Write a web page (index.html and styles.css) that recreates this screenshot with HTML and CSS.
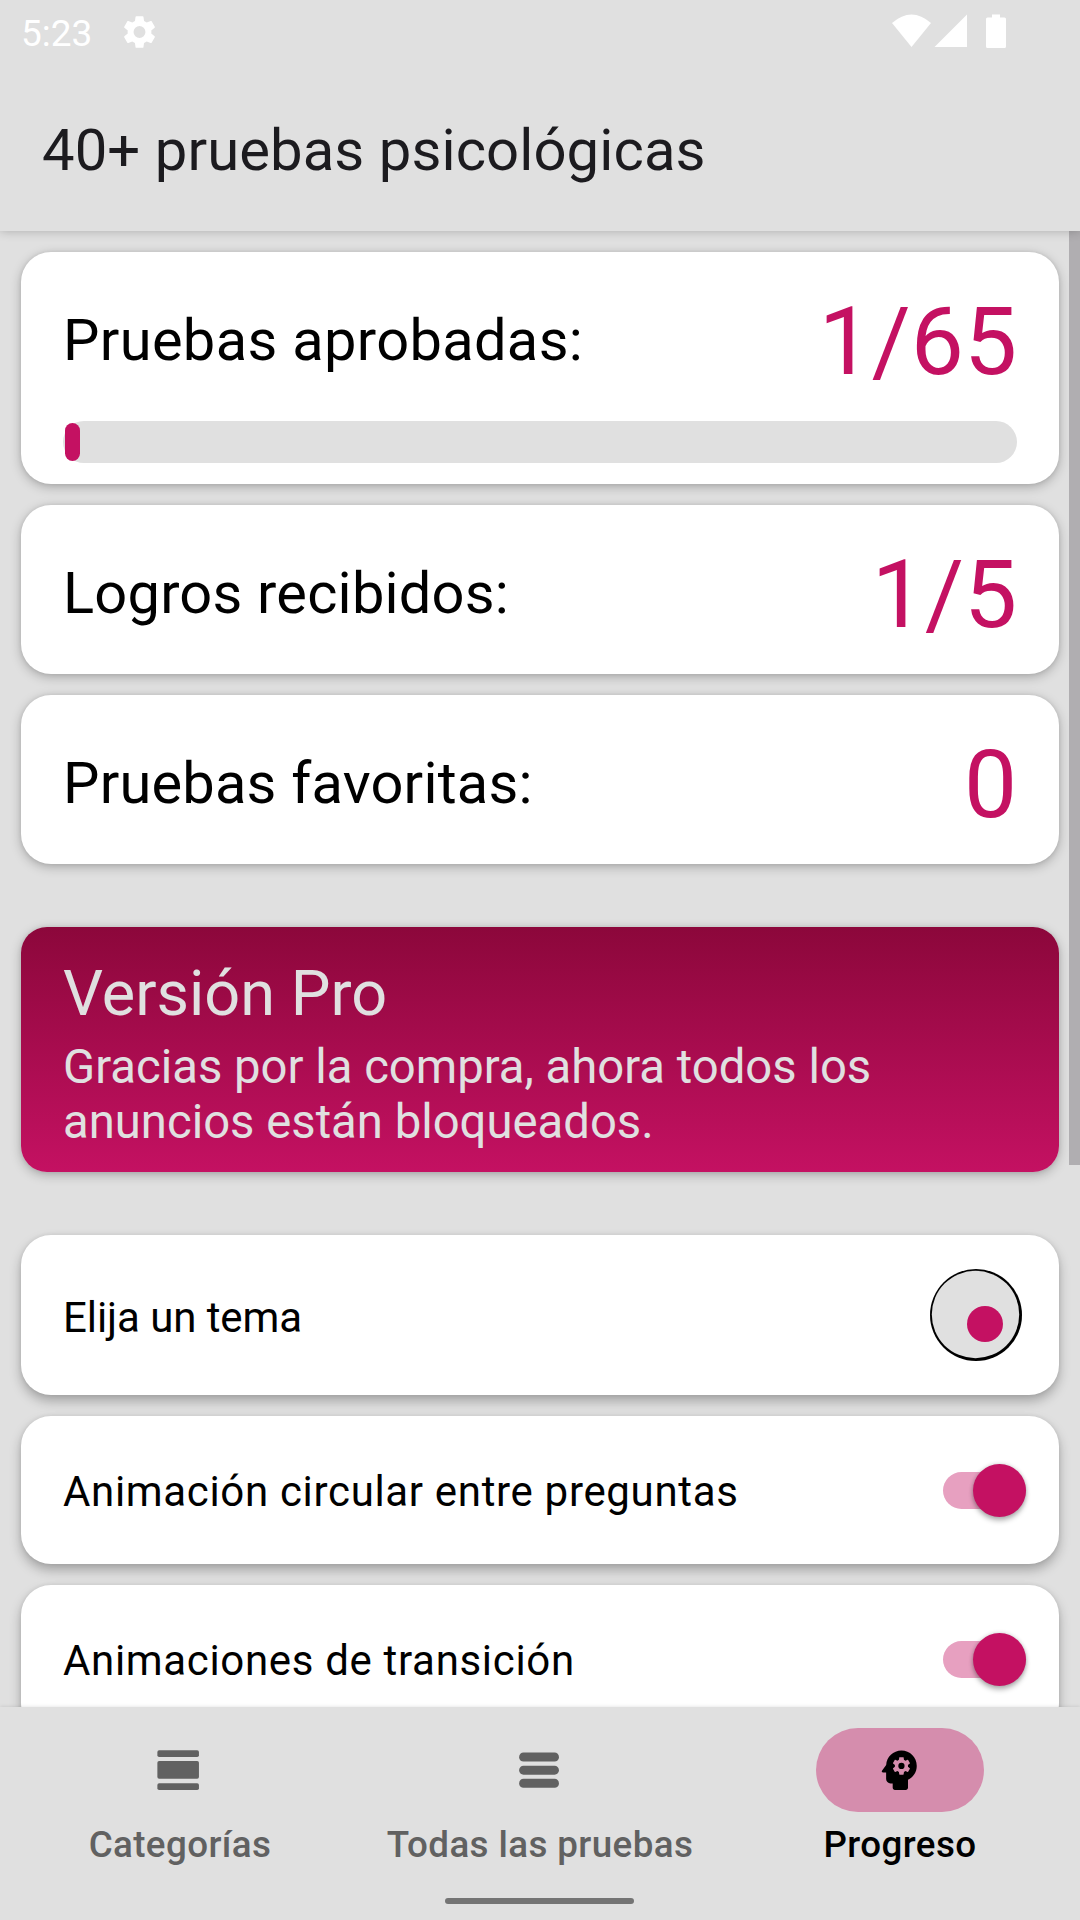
FILE: index.html
```
<!DOCTYPE html>
<html lang="es">
<head>
<meta charset="utf-8">
<title>40+ pruebas psicológicas</title>
<link rel="stylesheet" href="styles.css">
</head>
<body>
<div class="app">
  <header class="header">
    <div class="status">
      <span class="clock">5:23</span>
      <svg class="gear" viewBox="2 2 20 20"><path d="M19.14 12.94c.04-.3.06-.61.06-.94 0-.32-.02-.64-.07-.94l2.03-1.58c.18-.14.23-.41.12-.61l-1.92-3.32c-.12-.22-.37-.29-.59-.22l-2.39.96c-.5-.38-1.03-.7-1.62-.94l-.36-2.54c-.04-.24-.24-.41-.48-.41h-3.84c-.24 0-.43.17-.47.41l-.36 2.54c-.59.24-1.13.57-1.62.94l-2.39-.96c-.22-.08-.47 0-.59.22L2.74 8.87c-.12.21-.08.47.12.61l2.03 1.58c-.05.3-.09.63-.09.94s.02.64.07.94l-2.03 1.58c-.18.14-.23.41-.12.61l1.92 3.32c.12.22.37.29.59.22l2.39-.96c.5.38 1.03.7 1.62.94l.36 2.54c.05.24.24.41.48.41h3.84c.24 0 .44-.17.47-.41l.36-2.54c.59-.24 1.13-.56 1.62-.94l2.39.96c.22.08.47 0 .59-.22l1.92-3.32c.12-.22.07-.47-.12-.61l-2.01-1.58zM12 15.6A3.6 3.6 0 1 1 12 8.4a3.6 3.6 0 0 1 0 7.2z"/></svg>
      <svg class="system" viewBox="0 0 115 35"><path d="M0 9Q19.500-8 39 9L19.500 33z"/><path d="M42.500 33 75 .5V33z"/><path d="M100 .5h8v3h4.500q1.500 0 1.500 1.500v27.500q0 1.500-1.500 1.500h-17Q94 34 94 32.500V5q0-1.500 1.500-1.500h4.500z"/></svg>
    </div>
    <h1 class="title">40+ pruebas psicológicas</h1>
  </header>

  <main class="content">
    <div class="scrollbar"></div>
    <section class="card passed">
      <div class="stat"><span class="stat-label">Pruebas aprobadas:</span><span class="stat-value">1/65</span></div>
      <div class="progress"><div class="progress-fill"></div></div>
    </section>
    <section class="card counter stat"><span class="stat-label">Logros recibidos:</span><span class="stat-value">1/5</span></section>
    <section class="card counter stat"><span class="stat-label">Pruebas favoritas:</span><span class="stat-value">0</span></section>
    <section class="card pro">
      <h2 class="pro-title">Versión Pro</h2>
      <p class="pro-text">Gracias por la compra, ahora todos los anuncios están bloqueados.</p>
    </section>
    <section class="card setting theme"><span class="setting-label">Elija un tema</span>
      <svg class="swatch" viewBox="0 0 92 92"><circle cx="46" cy="46" r="46"/><circle cx="45.500" cy="45.500" r="43.700" fill="#e0e0e0"/><circle cx="55" cy="55" r="18" fill="#c41162"/></svg>
    </section>
    <section class="card setting"><span class="setting-label">Animación circular entre preguntas</span><div class="switch"><div class="thumb"></div></div></section>
    <section class="card setting"><span class="setting-label">Animaciones de transición</span><div class="switch"><div class="thumb"></div></div></section>
  </main>

  <nav class="nav">
    <div class="tabs">
      <a class="tab"><span class="pill"><svg class="icon" viewBox="0 0 24 24"><rect x="2" y="2.800" width="19" height="3.100" rx=".8"/><rect x="2" y="7.800" width="19" height="8.100" rx=".8"/><rect x="2" y="17.900" width="19" height="3.100" rx=".8"/></svg></span><span class="tab-label">Categorías</span></a>
      <a class="tab"><span class="pill"><svg class="icon" viewBox="0 0 24 24"><rect x="2.800" y="3.900" width="18.200" height="4.100" rx="2"/><rect x="2.800" y="9.900" width="18.200" height="4.100" rx="2"/><rect x="2.800" y="15.900" width="18.200" height="4.100" rx="2"/></svg></span><span class="tab-label">Todas las pruebas</span></a>
      <a class="tab active"><span class="pill"><svg class="icon" viewBox="0 0 24 24"><path d="M13 8.570a1.430 1.430 0 1 0 0 2.860 1.430 1.430 0 0 0 0-2.860z"/><path d="M13 3C9.250 3 6.200 5.940 6.020 9.640L4.100 12.200c-.25.33-.01.8.4.8H6v3c0 1.100.9 2 2 2h1v2c0 .55.45 1 1 1h5c.55 0 1-.45 1-1v-3.680c2.360-1.120 4-3.530 4-6.320 0-3.870-3.130-7-7-7zm3 7c0 .13-.01.26-.02.39l.83.66c.08.06.1.16.05.25l-.8 1.390c-.05.09-.16.12-.24.09l-.99-.4c-.21.16-.43.29-.67.39L14 13.830c-.01.1-.1.17-.2.17h-1.600c-.1 0-.18-.07-.2-.17l-.15-1.060c-.25-.1-.47-.23-.68-.39l-.99.4c-.09.03-.2 0-.25-.09l-.8-1.390c-.05-.08-.03-.19.05-.25l.84-.66C10.010 10.260 10 10.130 10 10c0-.13.02-.27.04-.39l-.85-.66c-.08-.06-.1-.16-.05-.26l.8-1.380c.05-.09.15-.12.24-.09l1 .4c.2-.15.43-.29.67-.39l.15-1.060c.02-.1.1-.17.2-.17h1.600c.1 0 .18.07.2.17l.15 1.060c.24.1.46.23.67.39l1-.4c.09-.03.2 0 .24.09l.8 1.380c.05.09.03.2-.05.26l-.85.66c.03.12.04.25.04.39z"/></svg></span><span class="tab-label">Progreso</span></a>
    </div>
    <div class="handle"></div>
  </nav>
</div>
</body>
</html>
```
FILE: styles.css
```
* { box-sizing: border-box; }
body { margin: 0; font-family: Roboto, sans-serif; color: #000; background: #e0e0e0; }
h1, h2, p { margin: 0; font-weight: 400; }
.app { width: 1080px; height: 1920px; display: flex; flex-direction: column; overflow: hidden; }

.header { flex: none; height: 231px; background: #e0e0e0; position: relative; z-index: 1; box-shadow: 0 0 10px rgba(0,0,0,.24); }
.status { height: 63px; padding: 0 73px 0 21px; display: flex; align-items: center; color: #fff; }
.status svg { fill: #fff; }
.clock { width: 102px; font-size: 37px; line-height: 43px; padding-top: 3px; }
.gear { width: 33px; height: 34px; }
.system { width: 115px; height: 35px; margin-left: auto; }
.title { height: 168px; padding: 0 42px; line-height: 175px; font-size: 58px; letter-spacing: .08px; color: #1c1b1f; }

.content { flex: 1; min-height: 0; overflow: hidden; position: relative; padding: 21px; display: flex; flex-direction: column; gap: 21px; }
.scrollbar { position: absolute; right: 0; top: 0; width: 11px; height: 934px; background: #b0aeb1; }
.card { flex: none; background: #fff; border-radius: 30px; padding: 0 42px; box-shadow: 0 3px 11px rgba(0,0,0,.25), 0 0 4px rgba(0,0,0,.08); }
.stat { display: flex; align-items: center; justify-content: space-between; }
.stat-label { font-size: 57.750px; letter-spacing: .22px; padding-bottom: 3px; }
.stat-value { font-size: 94.500px; color: #c41162; line-height: 111px; }
.passed { height: 232px; padding-top: 34px; }
.passed .stat-label { letter-spacing: .35px; }
.progress { height: 42px; margin-top: 24px; border-radius: 21px; background: #e0e0e0; padding: 2px; }
.progress-fill { width: 15px; height: 38px; border-radius: 7.500px; background: #c41162; }
.counter { height: 169px; padding-top: 9px; }
.pro { height: 245px; margin: 42px 0; padding-top: 30px; border-radius: 26px; color: #e0e0e0; background: linear-gradient(#8c073b, #c41162); }
.pro-title { font-size: 63px; line-height: 74px; }
.pro-text { font-size: 47.250px; line-height: 55px; margin-top: 9px; }
.setting { height: 148px; padding-right: 33px; display: flex; align-items: center; justify-content: space-between; font-size: 42px; letter-spacing: .67px; box-shadow: 0 6px 12px rgba(0,0,0,.27), 0 0 4px rgba(0,0,0,.08); }
.setting-label { padding-top: 2px; }
.theme { height: 160px; padding-right: 37px; letter-spacing: -.08px; }
.theme .setting-label { padding-top: 4px; }
.swatch { width: 92px; height: 92px; }
.switch { width: 83px; height: 37px; border-radius: 19px; background: #e7a0c0; display: flex; align-items: center; justify-content: flex-end; }
.thumb { flex: none; width: 53px; height: 53px; border-radius: 50%; background: #c41162; box-shadow: 0 4px 5px rgba(0,0,0,.25), 0 0 4px rgba(0,0,0,.2); }

.nav { flex: none; height: 213px; background: #e0e0e0; position: relative; z-index: 1; box-shadow: 0 0 4px rgba(0,0,0,.13); }
.tabs { height: 190px; padding-top: 21px; display: grid; grid-template-columns: repeat(3, 1fr); }
.tab { display: flex; flex-direction: column; align-items: center; color: #616161; fill: #616161; }
.pill { width: 168px; height: 84px; padding-right: 1px; border-radius: 42px; display: flex; align-items: center; justify-content: center; }
.icon { width: 52.500px; height: 52.500px; }
.tab-label { margin-top: 11px; font-size: 36.750px; line-height: 44px; font-weight: 500; letter-spacing: .4px; }
.active { color: #000; fill: #000; }
.active .pill { background: #d58dad; }
.handle { width: 189px; height: 6px; margin: 1px 0 0 445px; border-radius: 3px; background: #747474; }
```
